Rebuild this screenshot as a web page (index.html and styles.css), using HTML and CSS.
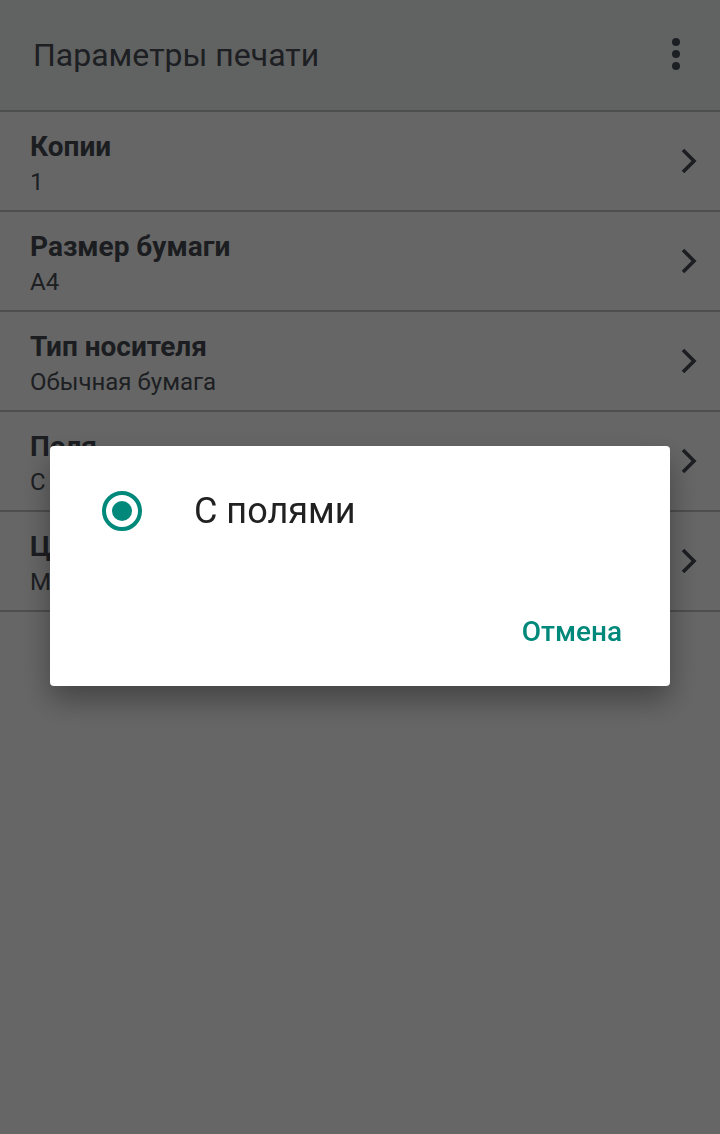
FILE: index.html
```html
<!DOCTYPE html>
<html lang="ru">
<head>
    <meta charset="UTF-8">
    <title>Параметры печати</title>
    <link rel="stylesheet" href="styles.css">
</head>
<body>

<div class="app">
    <div class="toolbar">
        <h1>Параметры печати</h1>
        <div class="menu">
            <span></span><span></span><span></span>
        </div>
    </div>

    <ul class="settings">
        <li class="item">
            <div class="text">
                <div class="title">Копии</div>
                <div class="value">1</div>
            </div>
            <svg class="chevron" width="18" height="26" viewBox="0 0 18 26"><polyline points="3,2 14,13 3,24"/></svg>
        </li>
        <li class="item">
            <div class="text">
                <div class="title">Размер бумаги</div>
                <div class="value">A4</div>
            </div>
            <svg class="chevron" width="18" height="26" viewBox="0 0 18 26"><polyline points="3,2 14,13 3,24"/></svg>
        </li>
        <li class="item">
            <div class="text">
                <div class="title">Тип носителя</div>
                <div class="value">Обычная бумага</div>
            </div>
            <svg class="chevron" width="18" height="26" viewBox="0 0 18 26"><polyline points="3,2 14,13 3,24"/></svg>
        </li>
        <li class="item">
            <div class="text">
                <div class="title">Поля</div>
                <div class="value">С полями</div>
            </div>
            <svg class="chevron" width="18" height="26" viewBox="0 0 18 26"><polyline points="3,2 14,13 3,24"/></svg>
        </li>
        <li class="item">
            <div class="text">
                <div class="title">Цвет</div>
                <div class="value">Монохромный</div>
            </div>
            <svg class="chevron" width="18" height="26" viewBox="0 0 18 26"><polyline points="3,2 14,13 3,24"/></svg>
        </li>
    </ul>
</div>

<div class="scrim">
    <div class="dialog">
        <div class="option">
            <span class="radio"></span>
            <span class="label">С полями</span>
        </div>
        <div class="actions">
            <button class="btn">Отмена</button>
        </div>
    </div>
</div>

</body>
</html>
```

FILE: styles.css
```css
body {
    margin: 0;
    padding: 0;
    font-family: Roboto, 'Noto Sans', sans-serif;
    background: white;
    height: 1134px;
    overflow: hidden;
}

.toolbar {
    height: 110px;
    background-color: #f3f5f5;
    border-bottom: 2px solid #c2c2c2;
    display: flex;
    align-items: center;
    justify-content: space-between;
    padding: 0 40px 0 33px;
}

.toolbar h1 {
    margin: 0;
    font-size: 32px;
    font-weight: 400;
    color: #4a4f56;
}

.menu {
    display: flex;
    flex-direction: column;
    gap: 4px;
    margin-top: -2px;
}

.menu span {
    width: 8px;
    height: 8px;
    border-radius: 50%;
    background-color: #484e58;
}

.settings {
    list-style: none;
    margin: 0;
    padding: 0;
}

.item {
    height: 98px;
    border-bottom: 2px solid #c2c2c2;
    display: flex;
    align-items: center;
    justify-content: space-between;
    padding: 0 22px 0 30px;
}

.text {
    align-self: flex-start;
    margin-top: 19px;
}

.title {
    font-size: 28px;
    font-weight: 700;
    line-height: 32px;
    color: #454a52;
}

.value {
    font-size: 24px;
    line-height: 28px;
    color: #4a4f56;
    margin-top: 5px;
}

.chevron polyline {
    fill: none;
    stroke: #474c56;
    stroke-width: 3.6;
}

.scrim {
    position: fixed;
    top: 0;
    left: 0;
    right: 0;
    bottom: 0;
    background-color: rgba(0, 0, 0, 0.6);
}

.dialog {
    position: absolute;
    top: 446px;
    left: 50px;
    width: 620px;
    height: 240px;
    background-color: #ffffff;
    border-radius: 4px;
    box-shadow: 0 14px 30px rgba(0, 0, 0, 0.35);
    display: flex;
    flex-direction: column;
}

.option {
    margin-top: 33px;
    height: 64px;
    display: flex;
    align-items: center;
    padding-left: 52px;
}

.radio {
    width: 32px;
    height: 32px;
    border: 4px solid #00897b;
    border-radius: 50%;
    display: flex;
    align-items: center;
    justify-content: center;
    box-sizing: content-box;
}

.radio::after {
    content: '';
    width: 20px;
    height: 20px;
    border-radius: 50%;
    background-color: #00897b;
}

.label {
    margin-left: 52px;
    font-size: 36px;
    color: #212121;
}

.actions {
    margin-top: 64px;
    display: flex;
    justify-content: flex-end;
    padding-right: 40px;
}

.btn {
    height: 48px;
    padding: 0 8px;
    border: none;
    background: none;
    font-family: Roboto, 'Noto Sans', sans-serif;
    font-size: 28px;
    font-weight: 500;
    color: #00897b;
}
```
